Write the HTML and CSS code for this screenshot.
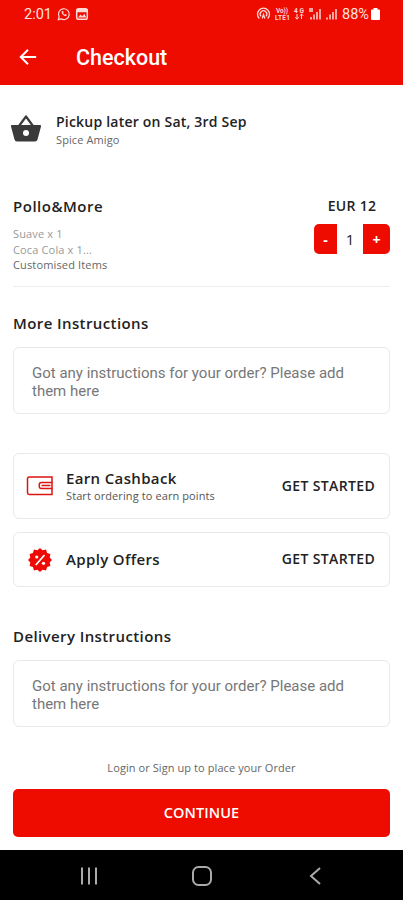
FILE: index.html
```html
<!DOCTYPE html>
<html lang="en">

<head>
    <meta charset="UTF-8">
    <meta name="viewport" content="width=device-width, initial-scale=1.0">
    <title>Checkout</title>
    <link rel="stylesheet" href="styles.css">
</head>

<body>
    <div class="screen">
        <header class="header">
            <div class="status-bar">
                <span class="clock">2:01</span>
                <svg class="status-left" width="32" height="14" viewBox="0 0 32 14" fill="none" stroke="#ffd9d5">
                    <path d="M1.300 12.600l.8-2.900A5.400 5.400 0 1 1 4.300 11.900z" stroke-width="1.200" />
                    <path d="M4.800 4.300c-.6 2.500 2 5.200 4.500 4.700l.5-1.300-1.400-.7-.7.700c-.8-.4-1.300-1-1.600-1.700l.6-.7-.6-1.300z" fill="#ffd9d5" stroke="none" />
                    <rect x="19.700" y="1.700" width="10.600" height="10.600" rx="1.800" stroke-width="1.500" />
                    <path d="M19.500 2h11v3.200h-11zM21 10.500l2.500-3 1.800 1.800 2-2.500 2 3.700z" fill="#ffd9d5" stroke="none" />
                </svg>
                <svg class="status-right" width="82" height="14" viewBox="0 0 82 14" fill="none" stroke="#ffd9d5">
                    <path d="M3.300 11.500a6 6 0 1 1 8.400 0M5 9.300a3.300 3.300 0 1 1 5 0M6.200 11.500l1.300-4 1.300 4" stroke-width="1.300" />
                    <g class="signal-label">
                        <text x="20" y="6" textLength="12">Vo))</text>
                        <text x="19" y="12.500" textLength="15">LTE1</text>
                        <text x="38" y="6" textLength="10">4G</text>
                    </g>
                    <path d="M41 7v5M39.200 10.200l1.800 2 1.800-2M45.500 12V7M43.700 8.800L45.500 7l1.800 1.800" />
                    <path d="M54 1v4M56 1v4M55 10v2.500M58 7.500v5M61 5v7.500M64 2v10.500" stroke-width="1.500" />
                    <path d="M71 10.500v2M74 7.500v5M77 5v7.500M80 2v10.500" stroke-width="1.500" />
                </svg>
                <span class="battery-level">88%</span>
                <svg width="9" height="12" viewBox="0 0 9 12">
                    <path d="M2.500 0h4v1.500H8q1 0 1 1V11q0 1-1 1H1q-1 0-1-1V2.500q0-1 1-1h1.500z" fill="#fff" />
                </svg>
            </div>
            <div class="toolbar">
                <svg width="18" height="18" viewBox="0 0 18 18" fill="none" stroke="#fff" stroke-width="2">
                    <path d="M17.200 9H2M9 1.800L1.800 9 9 16.200" />
                </svg>
                <h1 class="title">Checkout</h1>
            </div>
        </header>

        <main class="content">
            <section class="pickup">
                <svg width="32" height="30" viewBox="0 0 32 30">
                    <path d="M9 13L16 3.500 23 13" fill="none" stroke="#3a3a3a" stroke-width="2.200" stroke-linejoin="round" />
                    <path d="M2 12h28q1.400 0 1 1.400l-3.500 13Q27 28.500 25 28.500H7Q5 28.500 4.500 26.400L1 13.400Q.6 12 2 12z" fill="#3a3a3a" />
                    <circle cx="16" cy="20" r="3" fill="#fff" />
                </svg>
                <div>
                    <div class="pickup-title">Pickup later on Sat, 3rd Sep</div>
                    <div class="pickup-place">Spice Amigo</div>
                </div>
            </section>

            <section class="order-item">
                <div>
                    <h2 class="item-name">Pollo&amp;More</h2>
                    <div class="item-option">Suave x 1</div>
                    <div class="item-option">Coca Cola x 1...</div>
                    <div class="item-option customised">Customised Items</div>
                </div>
                <div class="item-side">
                    <div class="price">EUR 12</div>
                    <div class="stepper">
                        <button class="step minus">-</button>
                        <span class="quantity">1</span>
                        <button class="step plus">+</button>
                    </div>
                </div>
            </section>

            <section class="instructions">
                <h2 class="heading">More Instructions</h2>
                <div class="note"><span class="note-text">Got any instructions for your order? Please add<br>them here</span></div>
            </section>

            <section class="promos">
                <div class="card cashback">
                    <svg width="28" height="22" viewBox="0 0 28 22" fill="none" stroke="#dc1512" stroke-width="1.500">
                        <path d="M26 7.500V2H3.200Q1.500 2 1.500 3.700v14.100q0 1.700 1.700 1.700H26V13.500" />
                        <path d="M26.700 7.500H15.500q-2.200 0-2.200 2v2q0 2 2.200 2h11.200M26 7v7" />
                        <path d="M15.500 10.500h9" />
                    </svg>
                    <div class="card-text">
                        <div class="card-title cashback-title">Earn Cashback</div>
                        <div class="card-sub">Start ordering to earn points</div>
                    </div>
                    <span class="card-action">GET STARTED</span>
                </div>
                <div class="card offers">
                    <svg width="28" height="24" viewBox="-14 -12 28 24">
                        <path d="M0-12l2.600 2.300L6-10.400l1.100 3.300 3.300 1.100-.7 3.400L12 0 9.700 2.600l.7 3.400-3.300 1.100L6 10.400l-3.400-.7L0 12l-2.600-2.300-3.400.7-1.100-3.300-3.300-1.100.7-3.400L-12 0l2.300-2.600-.7-3.400 3.300-1.100L-6-10.400l3.400.7z" fill="#ee0b05" />
                        <path d="M-4.200 5L4.500-5" stroke="#fff" stroke-width="1.800" />
                        <circle cx="-3.300" cy="-3" r="1.600" fill="#fff" />
                        <circle cx="3.500" cy="3.300" r="1.600" fill="#fff" />
                    </svg>
                    <div class="card-text">
                        <div class="card-title">Apply Offers</div>
                    </div>
                    <span class="card-action">GET STARTED</span>
                </div>
            </section>

            <section class="instructions delivery">
                <h2 class="heading">Delivery Instructions</h2>
                <div class="note"><span class="note-text">Got any instructions for your order? Please add<br>them here</span></div>
            </section>
        </main>

        <footer class="footer">
            <p class="login-hint">Login or Sign up to place your Order</p>
            <button class="continue">CONTINUE</button>
        </footer>

        <nav class="nav-bar">
            <svg width="20" height="20" viewBox="0 0 20 20" stroke="#aaa" stroke-width="2">
                <path d="M3 1.500v17M10 1.500v17M17 1.500v17" />
            </svg>
            <svg width="20" height="20" viewBox="0 0 20 20" fill="none" stroke="#aaa" stroke-width="2">
                <rect x="1" y="1" width="18" height="18" rx="5.500" />
            </svg>
            <svg width="20" height="20" viewBox="0 0 20 20" fill="none" stroke="#aaa" stroke-width="2">
                <path d="M15 2L6 10l9 8" />
            </svg>
        </nav>
    </div>
</body>

</html>
```

FILE: styles.css
```css
* {
    padding: 0;
    margin: 0;
    box-sizing: border-box;
}

body {
    background: #fff;
    font-family: "Open Sans", sans-serif;
    color: #222;
}

button {
    border: none;
    font-family: inherit;
    color: #fff;
    background: #ee0b00;
}

svg {
    display: block;
    flex-shrink: 0;
}

.screen {
    display: flex;
    flex-direction: column;
    width: 403px;
    height: 900px;
    overflow: hidden;
    white-space: nowrap;
}

/* header */
.header {
    height: 85px;
    background: #ee0b00;
    color: #fff;
    font-family: Roboto, sans-serif;
}

.status-bar {
    display: flex;
    align-items: center;
    height: 28px;
    padding: 0 23px 0 24px;
    font-size: 14.5px;
    color: #ffe3df;
}

.clock {
    width: 33px;
}

.status-right {
    margin-left: auto;
}

.signal-label {
    font-size: 6.5px;
    font-weight: 700;
    fill: #ffd9d5;
    stroke: none;
}

.battery-level {
    width: 28px;
    margin-left: 4px;
    margin-right: 1px;
}

.toolbar {
    display: flex;
    align-items: center;
    height: 57px;
    padding-left: 19px;
}

.title {
    margin-left: 39px;
    padding-top: 1px;
    font-size: 21.5px;
    font-weight: 500;
}

/* content */
.content {
    flex: 1;
    padding: 0 13px;
}

.pickup {
    display: flex;
    margin-left: -3px;
    padding-top: 28px;
    gap: 14px;
}

.pickup-title {
    font-size: 14px;
    font-weight: 600;
    line-height: 18px;
    letter-spacing: 0.21px;
}

.pickup-place {
    font-size: 11px;
    line-height: 18px;
    letter-spacing: 0.1px;
    color: #666;
}

.order-item {
    display: flex;
    justify-content: space-between;
    height: 138px;
    padding-top: 47px;
    border-bottom: 1px solid #eee;
}

.item-name {
    height: 30px;
    font-size: 15px;
    font-weight: 600;
    line-height: 20px;
    letter-spacing: 0.5px;
}

.item-option {
    font-size: 11px;
    line-height: 15.5px;
    letter-spacing: 0.15px;
    color: #999;
}

.customised {
    color: #666;
}

.item-side {
    width: 76px;
}

.price {
    height: 28px;
    padding-top: 1px;
    font-size: 14px;
    font-weight: 600;
    line-height: 18px;
    letter-spacing: 0.3px;
    text-align: center;
}

.stepper {
    display: flex;
    height: 30px;
    line-height: 30px;
    text-align: center;
}

.step {
    font-size: 14px;
    font-weight: 700;
}

.minus {
    width: 23px;
    border-radius: 5px 0 0 5px;
}

.quantity {
    flex: 1;
    font-size: 15px;
}

.plus {
    width: 27px;
    border-radius: 0 5px 5px 0;
}

.instructions {
    padding-top: 26px;
}

.heading {
    height: 34px;
    font-size: 15px;
    font-weight: 600;
    line-height: 20px;
    letter-spacing: 0.4px;
}

.note {
    display: flex;
    align-items: center;
    height: 67px;
    padding: 2px 18px 0;
    border: 1px solid #e9e9e9;
    border-radius: 6px;
    font-family: Roboto, sans-serif;
    font-size: 15px;
    line-height: 18px;
    color: #777;
}

.promos {
    padding-top: 39px;
}

.card {
    display: flex;
    align-items: center;
    padding: 0 14px 0 12px;
    border: 1px solid #e9e9e9;
    border-radius: 6px;
}

.cashback {
    height: 66px;
    margin-bottom: 13px;
}

.offers {
    height: 55px;
}

.card-text {
    flex: 1;
    margin-left: 12px;
}

.card-title {
    font-size: 15px;
    font-weight: 600;
    line-height: 19px;
    letter-spacing: 0.35px;
}

.card-sub {
    font-size: 11px;
    line-height: 16px;
    letter-spacing: 0.1px;
    color: #555;
}

.card-action {
    padding-bottom: 2px;
    font-size: 14px;
    font-weight: 600;
    letter-spacing: 0.35px;
}

.delivery {
    padding-top: 39px;
}

/* bottom */
.footer {
    height: 90px;
    padding: 0 13px;
}

.login-hint {
    height: 29px;
    font-size: 11px;
    line-height: 16px;
    letter-spacing: 0.08px;
    text-align: center;
    color: #666;
}

.continue {
    width: 100%;
    height: 48px;
    padding-bottom: 2px;
    border-radius: 5px;
    font-size: 14.5px;
    font-weight: 600;
    letter-spacing: 0.1px;
}

.nav-bar {
    display: flex;
    align-items: center;
    justify-content: space-between;
    height: 50px;
    padding: 2px 78px 0 79px;
    background: #000;
}
```
